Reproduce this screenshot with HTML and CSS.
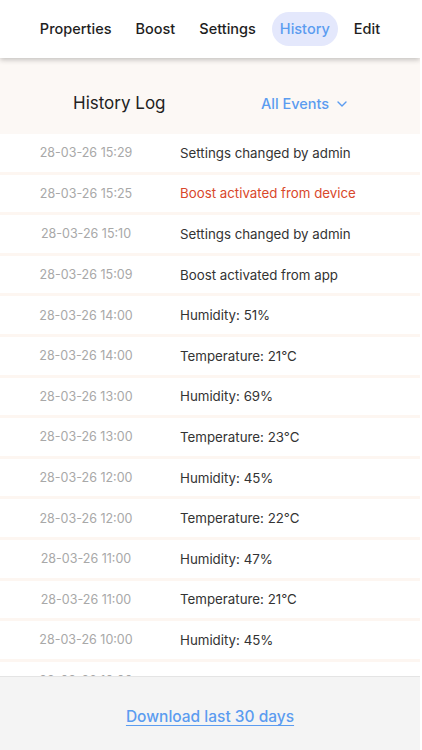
FILE: index.html
```html
<!DOCTYPE html>
<html>
<head>
<meta charset="utf-8">
<link rel="stylesheet" href="styles.css">
</head>
<body>
<div class="app">
  <nav class="tabs">
    <span class="tab">Properties</span>
    <span class="tab">Boost</span>
    <span class="tab">Settings</span>
    <span class="tab active">History</span>
    <span class="tab">Edit</span>
  </nav>
  <div class="log-head">
    <span class="log-title">History Log</span>
    <span class="filter">All Events
      <svg class="chev" width="10" height="6" viewBox="0 0 10 6"><path d="M1 1l4 4 4-4" fill="none" stroke="#5b9cf0" stroke-width="1.4" stroke-linecap="round" stroke-linejoin="round"/></svg>
    </span>
  </div>
  <div class="rows">
    <div class="row"><span class="date">28-03-26 15:29</span><span class="desc">Settings changed by admin</span></div>
    <div class="row"><span class="date">28-03-26 15:25</span><span class="desc alert">Boost activated from device</span></div>
    <div class="row"><span class="date">28-03-26 15:10</span><span class="desc">Settings changed by admin</span></div>
    <div class="row"><span class="date">28-03-26 15:09</span><span class="desc">Boost activated from app</span></div>
    <div class="row"><span class="date">28-03-26 14:00</span><span class="desc">Humidity: 51%</span></div>
    <div class="row"><span class="date">28-03-26 14:00</span><span class="desc">Temperature: 21°C</span></div>
    <div class="row"><span class="date">28-03-26 13:00</span><span class="desc">Humidity: 69%</span></div>
    <div class="row"><span class="date">28-03-26 13:00</span><span class="desc">Temperature: 23°C</span></div>
    <div class="row"><span class="date">28-03-26 12:00</span><span class="desc">Humidity: 45%</span></div>
    <div class="row"><span class="date">28-03-26 12:00</span><span class="desc">Temperature: 22°C</span></div>
    <div class="row"><span class="date">28-03-26 11:00</span><span class="desc">Humidity: 47%</span></div>
    <div class="row"><span class="date">28-03-26 11:00</span><span class="desc">Temperature: 21°C</span></div>
    <div class="row"><span class="date">28-03-26 10:00</span><span class="desc">Humidity: 45%</span></div>
    <div class="row"><span class="date">28-03-26 10:00</span><span class="desc">Temperature: 22°C</span></div>
  </div>
  <div class="footer">
    <a class="download" href="#">Download last 30 days</a>
  </div>
</div>
</body>
</html>
```
FILE: styles.css
```css
html, body {
  margin: 0;
  padding: 0;
  background: #ffffff;
}
body {
  font-family: "Inter", "Open Sans", sans-serif;
  overflow: hidden;
}
.app {
  width: 420px;
  height: 750px;
  overflow: hidden;
  background: #fcf8f5;
  display: flex;
  flex-direction: column;
}
.tabs {
  position: relative;
  z-index: 2;
  flex: 0 0 58px;
  background: #ffffff;
  box-shadow: 0 2px 5px rgba(0, 0, 0, 0.22);
  display: flex;
  align-items: center;
  justify-content: center;
  gap: 8px;
}
.tab {
  font-size: 14.5px;
  font-weight: 500;
  color: #1e1e1e;
  padding: 8px 8px;
  border-radius: 18px;
  line-height: 18px;
}
.tab.active {
  background: #e4e8fc;
  color: #5b9cf0;
}
.log-head {
  flex: 0 0 76px;
  display: flex;
  align-items: center;
  padding-left: 73px;
  padding-top: 14px;
  box-sizing: border-box;
}
.log-title {
  font-size: 17px;
  color: #222222;
  width: 188px;
}
.filter {
  font-size: 14.5px;
  font-weight: 500;
  color: #5b9cf0;
  display: flex;
  align-items: center;
  gap: 8px;
}
.chev {
  margin-top: 1px;
}
.rows {
  flex: 1 1 auto;
  min-height: 0;
  overflow: hidden;
  display: flex;
  flex-direction: column;
  gap: 3px;
  background: #fdf6f1;
}
.row {
  flex: 0 0 37.6px;
  background: #ffffff;
  display: grid;
  grid-template-columns: 172px 1fr;
  column-gap: 8px;
  align-items: center;
}
.date {
  font-size: 12.5px;
  color: #a8a8a8;
  text-align: center;
}
.desc {
  font-size: 13.3px;
  color: #333333;
}
.desc.alert {
  color: #d9482b;
}
.footer {
  flex: 0 0 73px;
  background: #f4f4f4;
  border-top: 1px solid #e4e4e4;
  display: flex;
  align-items: center;
  justify-content: center;
}
.download {
  font-size: 15.5px;
  font-weight: 500;
  color: #5b9cf0;
  text-decoration: underline;
  text-underline-offset: 3px;
  margin-top: 6px;
}
```
